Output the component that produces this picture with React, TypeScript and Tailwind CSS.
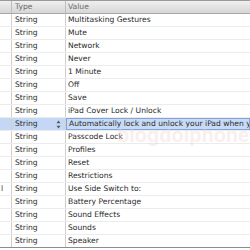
import React from 'react';

type Row = { key?: string; value: string; selected?: boolean };

const rows: Row[] = [
  { value: 'Multitasking Gestures' },
  { value: 'Mute' },
  { value: 'Network' },
  { value: 'Never' },
  { value: '1 Minute' },
  { value: 'Off' },
  { value: 'Save' },
  { value: 'iPad Cover Lock / Unlock' },
  { value: 'Automatically lock and unlock your iPad when you close and open the cover.', selected: true },
  { value: 'Passcode Lock' },
  { value: 'Profiles' },
  { value: 'Reset' },
  { value: 'Restrictions' },
  { key: 'l', value: 'Use Side Switch to:' },
  { value: 'Battery Percentage' },
  { value: 'Sound Effects' },
  { value: 'Sounds' },
  { value: 'Speaker' },
];

const Stepper = () => (
  <svg width="5" height="9" viewBox="0 0 5 9" className="shrink-0">
    <path d="M2.5 0.5 L4.5 3.2 L0.5 3.2 Z" fill="#555" />
    <path d="M2.5 8.5 L4.5 5.8 L0.5 5.8 Z" fill="#555" />
  </svg>
);

export default function App() {
  return (
    <div className="relative w-[250px] h-[250px] overflow-hidden bg-white text-[#2a2a2a] font-['DejaVu_Sans',sans-serif] text-[7.6px] leading-none">
      {/* header */}
      <div className="flex h-[14px] border-t border-b border-t-[#9a9a9a] border-b-[#a8a8a8] bg-gradient-to-b from-[#f0f0f0] to-[#d6d6d6] text-[#6a6a6a]">
        <div className="w-[12px] border-r border-[#bdbdbd]" />
        <div className="w-[54px] border-r border-[#bdbdbd] pl-[3px] flex items-center">Type</div>
        <div className="flex-1 pl-[2px] flex items-center">Value</div>
      </div>

      {rows.map((r, i) => (
        <div
          key={i}
          className={`flex h-[13px] border-b ${i === rows.length - 1 ? 'border-[#8c8c8c]' : 'border-[#ececec]'} ${r.selected ? 'bg-[#c4d8f5]' : ''}`}
        >
          <div className="w-[12px] border-r border-[#cfcfcf] flex items-center pl-[1px] overflow-hidden">
            {r.key}
          </div>
          <div className="w-[54px] border-r border-[#cfcfcf] flex items-center pl-[3px] pr-[4px] justify-between">
            <span>String</span>
            {r.selected && <Stepper />}
          </div>
          <div
            className={`flex-1 flex items-center pl-[2px] whitespace-nowrap overflow-hidden ${r.selected ? 'border border-[#7fa5db] bg-[#c8dbf6]' : ''}`}
          >
            {r.value}
          </div>
        </div>
      ))}

      {/* watermark */}
      <div className="absolute left-[117px] top-[125px] text-[20px] font-['Liberation_Sans',sans-serif] font-bold text-[#f0d2d2] opacity-35 whitespace-nowrap pointer-events-none">
        blogdoiphone
      </div>
    </div>
  );
}
